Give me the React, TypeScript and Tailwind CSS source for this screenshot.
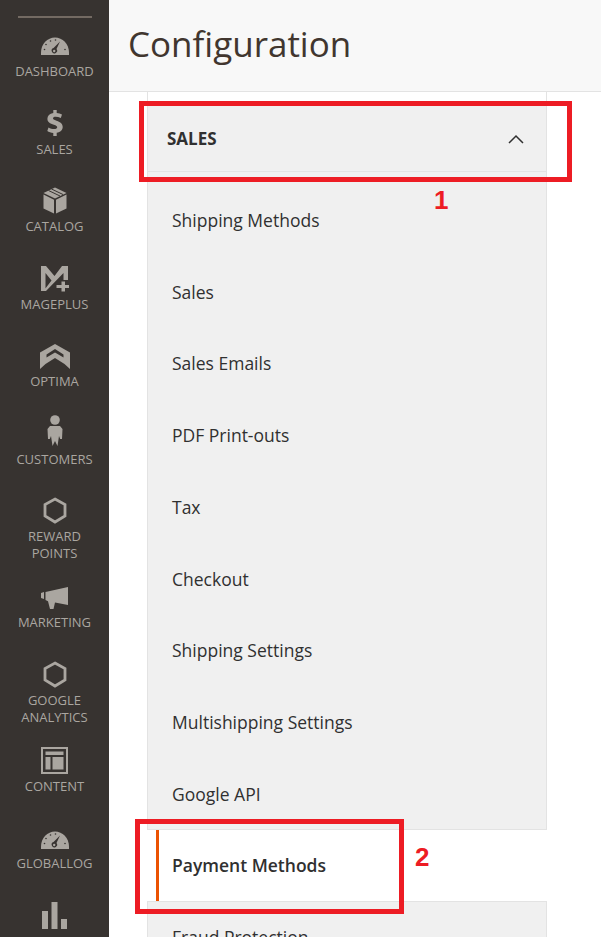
import React from "react";

const C = "#aaa6a0";
const D = "#373330";

const Gauge = ({ cls }: { cls: string }) => (
  <svg width="28" height="18" viewBox="0 0 28 18" className={cls}>
    <path d="M0 18V15.500C0 7 6.500 0.500 14 0.500S28 7 28 15.500V18z" fill={C} />
    <g fill={D}>
      <circle cx="3.500" cy="12.500" r="0.800" />
      <circle cx="5" cy="7.500" r="0.800" />
      <circle cx="9.500" cy="4" r="0.800" />
      <circle cx="14.500" cy="3" r="0.800" />
      <circle cx="24" cy="12.500" r="0.800" />
    </g>
    <path d="M19 4.500L15.500 12a2.700 2.700 0 1 1-3-.9z" fill={D} />
    <circle cx="13.200" cy="14" r="1.200" fill={C} />
  </svg>
);

const Hex = ({ cls }: { cls: string }) => (
  <svg width="24" height="27" viewBox="0 0 24 27" className={cls}>
    <path d="M12 2L22 7.500V19L12 25L2 19V7.500Z" fill="none" stroke={C} strokeWidth="2.800" />
  </svg>
);

const Dollar = ({ cls }: { cls: string }) => (
  <svg width="16" height="26" viewBox="0 0 16 26" className={cls}>
    <path
      fill={C}
      d="M6.300 0h3.400v3c2 .2 3.800.7 5.300 1.500l-1.200 3.500C12 7.200 10.300 6.700 8.600 6.700c-1.700 0-2.600.6-2.600 1.500 0 1 .9 1.500 3.500 2.500 4.200 1.500 6.200 3.200 6.200 6.300 0 3-2.200 5.300-6 5.800V26H6.300v-3.100c-2.300-.2-4.500-.9-6-1.900l1.200-3.600c1.700 1 3.800 1.700 5.700 1.700 1.800 0 3-.7 3-1.800 0-1.100-1-1.700-3.300-2.500C3 13.500.4 12 .4 8.700c0-2.900 2.100-5.100 5.900-5.700z"
    />
  </svg>
);

const Box = ({ cls }: { cls: string }) => (
  <svg width="24" height="27" viewBox="0 0 24 27" className={cls}>
    <path fill={C} d="M0.500 7.500L11 12.800V26.500L0.500 21.500Z" />
    <path fill={C} d="M23.500 7.500L13 12.800V26.500L23.500 21.500Z" />
    <path fill={C} d="M12 0.500L23.500 6L12 11.500L0.500 6Z" />
    <path d="M5.500 3.500L17 9M8.500 2L20 7.500" stroke={D} strokeWidth="1" fill="none" />
  </svg>
);

const MagePlus = ({ cls }: { cls: string }) => (
  <svg width="28" height="28" viewBox="0 0 28 28" className={cls}>
    <path
      fill={C}
      d="M0 0H5L13.500 10L21 0H27V14H22.500V7L5 25H2.500L10.500 14.500L4.500 7V25H0Z"
    />
    <path fill={C} d="M20.500 15.500H24V19H28V22H24V25.500H20.500V22H15.500V19H20.500Z" />
  </svg>
);

const Optima = ({ cls }: { cls: string }) => (
  <svg width="30" height="25" viewBox="0 0 30 25" className={cls}>
    <path
      fill={C}
      fillRule="evenodd"
      d="M0 8.500L15 0L30 8.500V25L24.500 20L15 14L5.500 20L0 25ZM15 5L23.500 10.500V13.500L15 8.500L6.500 13.500V10.500Z"
    />
  </svg>
);

const Person = ({ cls }: { cls: string }) => (
  <svg width="16" height="31" viewBox="0 0 16 31" className={cls}>
    <circle cx="8" cy="5" r="4.800" fill={C} />
    <path fill={C} d="M3 11H13L15.500 14L15 24H13.200L12 21L10.500 31L8 26L5.500 31L4 21L2.800 24H1L0.500 14Z" />
  </svg>
);

const Megaphone = ({ cls }: { cls: string }) => (
  <svg width="27" height="22" viewBox="0 0 27 22" className={cls}>
    <path fill={C} d="M0 6L3 5V12L0 11Z" />
    <path fill={C} d="M4.500 5L27 0V18L14 15.500L12.500 22H9L7 14.300L4.500 13Z" />
  </svg>
);

const Layout = ({ cls }: { cls: string }) => (
  <svg width="27" height="27" viewBox="0 0 27 27" className={cls}>
    <path fill={C} fillRule="evenodd" d="M0 0H27V27H0ZM2 2V25H25V2Z" />
    <path fill={C} d="M4.500 4.500H22.500V8H4.500ZM4.500 10H9.500V22.500H4.500ZM11.500 10H22.500V22.500H11.500Z" />
  </svg>
);

const Bars = ({ cls }: { cls: string }) => (
  <svg width="25" height="27" viewBox="0 0 25 27" className={cls}>
    <path fill={C} d="M0 9H6V27H0ZM9.500 0H15.500V27H9.500ZM19 17H25V27H19Z" />
  </svg>
);

const nav = [
  { label: ["DASHBOARD"], icon: <Gauge cls="-mt-[4px]" /> },
  { label: ["SALES"], icon: <Dollar cls="-mt-[5px]" /> },
  { label: ["CATALOG"], icon: <Box cls="-mt-[6px]" /> },
  { label: ["MAGEPLUS"], icon: <MagePlus cls="-mt-[1px]" /> },
  { label: ["OPTIMA"], icon: <Optima cls="-mt-[4px]" /> },
  { label: ["CUSTOMERS"], icon: <Person cls="-mt-[10px]" /> },
  { label: ["REWARD", "POINTS"], icon: <Hex cls="-mt-[6px]" />, two: true },
  { label: ["MARKETING"], icon: <Megaphone cls="-mt-[3px]" /> },
  { label: ["GOOGLE", "ANALYTICS"], icon: <Hex cls="-mt-[5px]" />, two: true },
  { label: ["CONTENT"], icon: <Layout cls="-mt-[4px]" /> },
  { label: ["GLOBALLOG"], icon: <Gauge cls="mt-0" /> },
  { label: ["REPORTS"], icon: <Bars cls="-mt-[4px]" /> },
];

const items = [
  "Shipping Methods",
  "Sales",
  "Sales Emails",
  "PDF Print-outs",
  "Tax",
  "Checkout",
  "Shipping Settings",
  "Multishipping Settings",
  "Google API",
];

export default function App() {
  return (
    <div className="relative flex h-[937px] w-[601px] overflow-hidden bg-white font-['Open_Sans',sans-serif]">
      <aside className="flex w-[109px] shrink-0 flex-col items-center bg-[#373330] pt-[16px]">
        <div className="mb-[13px] h-[2px] w-[74px] shrink-0 bg-[#736a62]" />
        {nav.map((n) => (
          <div
            key={n.label[0]}
            className={`flex w-full shrink-0 flex-col items-center ${n.two ? "h-[86px]" : "h-[77.5px]"}`}
          >
            <div className="flex h-[34px] w-full items-center justify-center">{n.icon}</div>
            {n.label.map((l) => (
              <div key={l} className="h-[17px] -translate-y-[2px] text-[13px] leading-[17px] text-[#aaa6a0]">
                {l}
              </div>
            ))}
          </div>
        ))}
      </aside>

      <main className="flex min-w-0 flex-1 flex-col">
        <header className="flex h-[92px] shrink-0 items-center border-b border-[#e3e3e3] bg-[#f8f8f8] pb-[4px] pl-[19px]">
          <h1 className="text-[35px] leading-[44px] font-normal text-[#41362f]">Configuration</h1>
        </header>

        <div className="ml-[38px] w-[400px] text-[17.5px] text-[#303030]">
          <div className="border-x border-b border-[#e3e3e3] pt-[14px]">
            <div className="flex h-[66px] items-center justify-between border-b border-[#e3e3e3] bg-[#f0f0f0] pr-[21px] pl-[19px]">
              <span className="text-[17px] font-bold text-[#303030]">SALES</span>
              <svg width="18" height="10" viewBox="0 0 18 10" fill="none" stroke="#303030" strokeWidth="1.500">
                <path d="M2 9L9 2L16 9" />
              </svg>
            </div>
            <ul className="h-[657px] bg-[#f0f0f0] pt-[12px]">
              {items.map((t) => (
                <li key={t} className="flex h-[71.75px] items-center pl-[24px]">
                  {t}
                </li>
              ))}
            </ul>
          </div>
          <div className="ml-[9px] flex h-[71px] items-center border-l-[3px] border-[#eb5202] pl-[13px] font-semibold">
            Payment Methods
          </div>
          <div className="h-[72px] border border-[#e3e3e3] bg-[#f0f0f0] pl-[24px] pt-[22px]">Fraud Protection</div>
        </div>
      </main>

      <div className="absolute top-[101px] left-[139px] h-[81px] w-[433px] border-[5px] border-[#ed1c24]" />
      <div className="absolute top-[819px] left-[135px] h-[95px] w-[269px] border-[5px] border-[#ed1c24]" />
      <div className="absolute top-[185px] left-[434px] font-['Liberation_Sans',sans-serif] text-[26px] leading-[30px] font-bold text-[#ed1c24]">
        1
      </div>
      <div className="absolute top-[842px] left-[415px] font-['Liberation_Sans',sans-serif] text-[26px] leading-[30px] font-bold text-[#ed1c24]">
        2
      </div>
    </div>
  );
}
